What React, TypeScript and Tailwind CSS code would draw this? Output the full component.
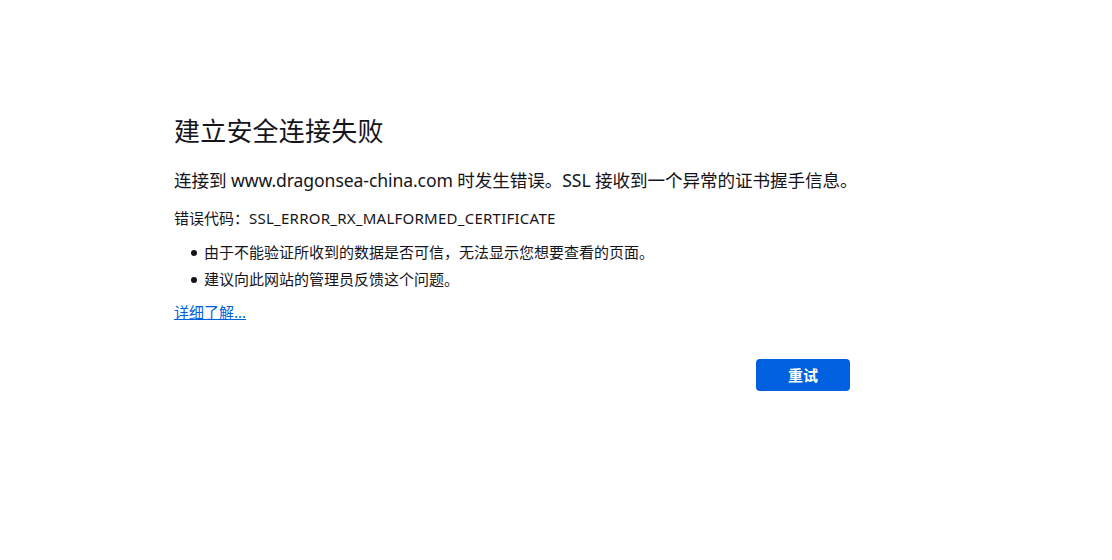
import React from "react";

export default function App() {
  const font = { fontFamily: '"Noto Sans", "Noto Sans CJK SC", sans-serif' };
  const items = [
    "由于不能验证所收到的数据是否可信，无法显示您想要查看的页面。",
    "建议向此网站的管理员反馈这个问题。",
  ];
  return (
    <div className="w-[1112px] h-[560px] bg-white text-[#15141a]" style={font}>
      <div className="ml-[174px] w-[676px] pt-[113px]">
        <h1 className="text-[26px] leading-[36px] font-normal tracking-[0.2px]">建立安全连接失败</h1>
        <p className="mt-[18px] text-[17.6px] leading-[26px] whitespace-nowrap tracking-[-0.1px]">
          连接到 www.dragonsea-china.com 时发生错误。SSL 接收到一个异常的证书握手信息。
        </p>
        <p className="mt-[14px] text-[15px] leading-[22px]">
          错误代码：<span className="tracking-[0.25px]">SSL_ERROR_RX_MALFORMED_CERTIFICATE</span>
        </p>
        <ul className="mt-[10px] text-[15px] leading-[27px]">
          {items.map((t) => (
            <li key={t} className="flex items-center">
              <span className="ml-[17px] mr-[7px] w-[6px] h-[6px] rounded-full bg-[#15141a]" />
              <span>{t}</span>
            </li>
          ))}
        </ul>
        <div className="mt-[8px] text-[15px] leading-[22px]">
          <a href="#" className="text-[#0061e0] underline">详细了解...</a>
        </div>
        <div className="mt-[36px] flex justify-end">
          <button className="w-[94px] h-[32px] rounded-[4px] bg-[#0061e0] text-white text-[15px] font-bold">
            重试
          </button>
        </div>
      </div>
    </div>
  );
}
